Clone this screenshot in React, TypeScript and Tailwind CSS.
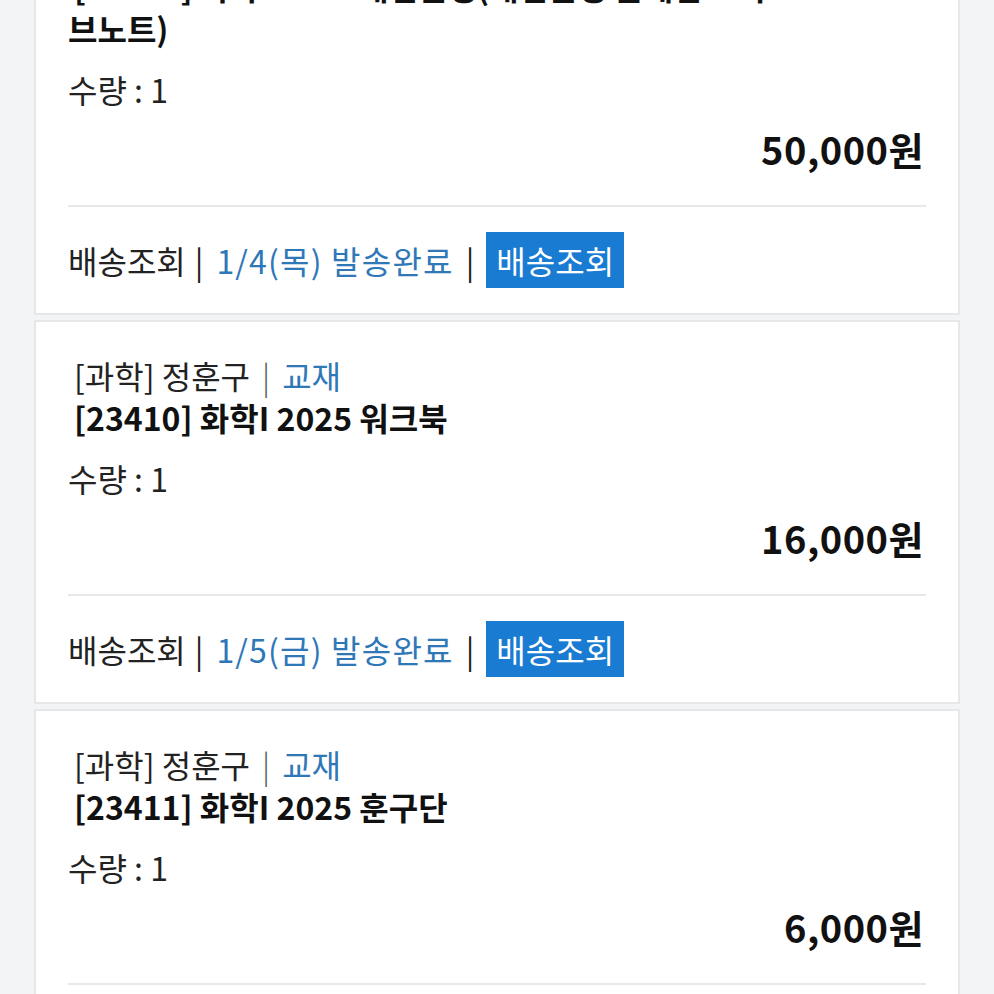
import React from 'react';

type Order = {
  category: string;
  author: string;
  kind: string;
  title: React.ReactNode;
  qty: number;
  price: string;
  date: string;
};

const orders: Order[] = [
  {
    category: '[과학]',
    author: '정훈구',
    kind: '교재',
    title: (
      <>
        [23409] 화학I 2025 개념완성(개념완성 문제집 + 서
        <br />
        브노트)
      </>
    ),
    qty: 1,
    price: '50,000원',
    date: '1/4(목)',
  },
  {
    category: '[과학]',
    author: '정훈구',
    kind: '교재',
    title: '[23410] 화학I 2025 워크북',
    qty: 1,
    price: '16,000원',
    date: '1/5(금)',
  },
  {
    category: '[과학]',
    author: '정훈구',
    kind: '교재',
    title: '[23411] 화학I 2025 훈구단',
    qty: 1,
    price: '6,000원',
    date: '1/5(금)',
  },
];

function OrderCard({ order }: { order: Order }) {
  return (
    <div className="bg-white border-2 border-[#e6e7e9]">
      <div className="px-[32px] pt-[32px]">
        <p className="indent-[6px] text-[32px] leading-[42px] text-[#222]">
          {order.category} {order.author}
          <span className="mx-[12px] text-[#555] font-light">|</span>
          <span className="text-[#2f78b8]">{order.kind}</span>
        </p>
        <p className="indent-[6px] text-[32px] leading-[42px] font-bold text-[#111]">{order.title}</p>
        <p className="mt-[19px] text-[32px] leading-[42px] text-[#222]">수량 : {order.qty}</p>
        <p className="mt-[18px] text-right text-[38px] leading-[42px] font-bold text-[#111] pr-[2px] tracking-[0.5px]">
          {order.price}
        </p>
        <div className="mt-[35px] h-[2px] bg-[#e8e8e8]" />
      </div>
      <div className="px-[32px] pt-[25px] pb-[25px] flex items-center text-[32px] leading-[42px] text-[#222]">
        <span>배송조회</span>
        <span className="ml-[9px] mr-[13px] text-[#222]">|</span>
        <span className="text-[#2f78b8] tracking-[1.2px]">{order.date} 발송완료</span>
        <span className="ml-[12px] mr-[12px] text-[#222]">|</span>
        <span className="bg-[#1a7bd2] text-white px-[10px] py-[7px]">배송조회</span>
      </div>
    </div>
  );
}

export default function App() {
  return (
    <div
      className="h-[994px] overflow-hidden bg-[#f3f4f6]"
      style={{ fontFamily: '"Noto Sans CJK KR", "Noto Sans", sans-serif' }}
    >
      <div className="-mt-[111px] px-[34px] flex flex-col gap-[5px]">
        {orders.map((o, i) => (
          <OrderCard key={i} order={o} />
        ))}
      </div>
    </div>
  );
}
